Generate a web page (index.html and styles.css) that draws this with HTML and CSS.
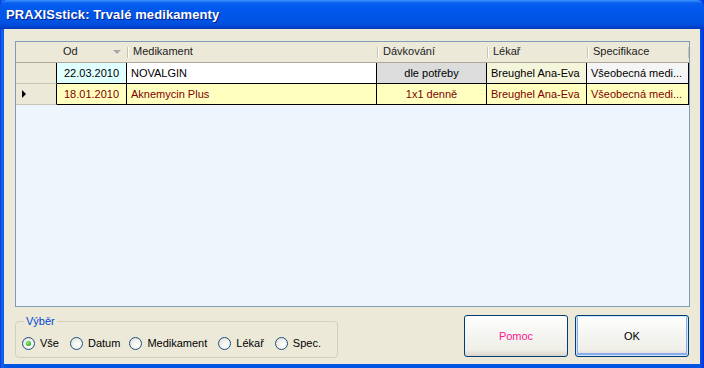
FILE: index.html
```html
<!DOCTYPE html>
<html lang="cs">
<head>
    <meta charset="UTF-8">
    <title>PRAXISstick: Trvalé medikamenty</title>
    <link rel="stylesheet" href="styles.css">
</head>
<body>
    <div class="window">
        <div class="titlebar">PRAXISstick: Trvalé medikamenty</div>
        <div class="client">
            <div class="grid">
                <div class="row header">
                    <div class="cell ind"></div>
                    <div class="cell col-od">Od <span class="sort"></span></div>
                    <div class="cell col-med">Medikament</div>
                    <div class="cell col-dav">Dávkování</div>
                    <div class="cell col-lek">Lékař</div>
                    <div class="cell col-spec">Specifikace</div>
                </div>
                <div class="row data">
                    <div class="cell ind"></div>
                    <div class="cell col-od c-center od-bg">22.03.2010</div>
                    <div class="cell col-med">NOVALGIN</div>
                    <div class="cell col-dav c-center dav-bg">dle potřeby</div>
                    <div class="cell col-lek lek-bg">Breughel Ana-Eva</div>
                    <div class="cell col-spec spec-bg">Všeobecná medi...</div>
                </div>
                <div class="row data current">
                    <div class="cell ind"><span class="arrow"></span></div>
                    <div class="cell col-od c-center">18.01.2010</div>
                    <div class="cell col-med">Aknemycin Plus</div>
                    <div class="cell col-dav c-center">1x1 denně</div>
                    <div class="cell col-lek">Breughel Ana-Eva</div>
                    <div class="cell col-spec">Všeobecná medi...</div>
                </div>
            </div>

            <div class="bottom">
                <fieldset class="groupbox">
                    <legend>Výběr</legend>
                    <label class="radio"><span class="dot checked"></span>Vše</label>
                    <label class="radio"><span class="dot"></span>Datum</label>
                    <label class="radio"><span class="dot"></span>Medikament</label>
                    <label class="radio"><span class="dot"></span>Lékař</label>
                    <label class="radio"><span class="dot"></span>Spec.</label>
                </fieldset>
                <div class="buttons">
                    <button class="btn help">Pomoc</button>
                    <button class="btn default">OK</button>
                </div>
            </div>
        </div>
    </div>
</body>
</html>
```

FILE: styles.css
```css
* {
    margin: 0;
    padding: 0;
    box-sizing: border-box;
}

body {
    width: 704px;
    height: 368px;
    overflow: hidden;
    font-family: "Liberation Sans", Arial, sans-serif;
    font-size: 11px;
}

.window {
    width: 704px;
    height: 368px;
    display: flex;
    flex-direction: column;
    background: linear-gradient(to right, #0831d9 0, #166aee 2px, #0055e5 4px, #0055e5 700px, #0831d9 704px);
}

.titlebar {
    height: 29px;
    flex: none;
    padding: 7px 0 0 6px;
    color: white;
    font-weight: bold;
    font-size: 13px;
    letter-spacing: 0.1px;
    text-shadow: 1px 1px 0 #0a1e8c;
    border-radius: 7px 7px 0 0;
    background: linear-gradient(to bottom, #3d95ff 0, #0a5ff0 3px, #0058ee 8px, #0055e5 18px, #0050de 24px, #0043cf 27px, #0038b8 29px);
}

.client {
    flex: 1;
    margin: 0 4px 4px 4px;
    background-color: #ece9d8;
    padding: 12px 10px 0 11px;
    display: flex;
    flex-direction: column;
}

.grid {
    height: 266px;
    border: 1px solid #7f9db9;
    background-color: #eff5fd;
}

.row {
    display: flex;
    height: 21px;
}

.row.header {
    background-color: #ece9d8;
    border-bottom: 1px solid #aca899;
    height: 21px;
}

.cell {
    height: 100%;
    padding: 0 4px;
    line-height: 20px;
    white-space: nowrap;
    overflow: hidden;
}

.ind { width: 41px; }
.col-od { width: 70px; }
.col-med { width: 250px; }
.col-dav { width: 110px; }
.col-lek { width: 100px; }
.col-spec { width: 102px; }

.header .cell {
    position: relative;
    line-height: 18px;
    padding-left: 6px;
    color: #222;
}

.header .cell + .cell + .cell::before {
    content: "";
    position: absolute;
    left: 0;
    top: 5px;
    width: 1px;
    height: 11px;
    background-color: #c7c5b2;
    box-shadow: 1px 0 0 #fff;
}

.header .col-spec::after {
    content: "";
    position: absolute;
    right: 0;
    top: 5px;
    width: 1px;
    height: 11px;
    background-color: #c7c5b2;
}

.sort {
    position: absolute;
    right: 6px;
    top: 8px;
    border-left: 4px solid transparent;
    border-right: 4px solid transparent;
    border-top: 4px solid #a7a6aa;
}

.data .cell {
    border-right: 1px solid #000;
    border-bottom: 1px solid #000;
    background-color: #fff;
    color: #000;
}

.data .ind {
    background-color: #ece9d8;
    border-right: 1px solid #000;
    border-bottom: 1px solid #c7c5b2;
    position: relative;
}

.c-center { text-align: center; }

.od-bg { background-color: #e0ffff !important; }
.dav-bg { background-color: #dcdcdc !important; }
.lek-bg { background-color: #f5f5dc !important; }
.spec-bg { background-color: #f5f5f5 !important; }

.current .cell {
    background-color: #ffffc0;
    color: #800000;
}

.current .ind {
    background-color: #ece9d8;
    border-bottom: 1px solid #c7c5b2;
}

.arrow {
    position: absolute;
    left: 6px;
    top: 6px;
    border-top: 4px solid transparent;
    border-bottom: 4px solid transparent;
    border-left: 4px solid #000;
}

.bottom {
    display: flex;
    justify-content: space-between;
    align-items: flex-start;
}

.groupbox {
    margin-top: 8px;
    width: 323px;
    height: 43px;
    border: 1px solid #d0d0bf;
    border-radius: 4px;
    padding: 2px 0 0 6px;
    display: flex;
}

.groupbox legend {
    color: #0046d5;
    padding: 0 2px;
    margin-left: 2px;
    line-height: 12px;
}

.radio {
    display: flex;
    align-items: center;
    margin-right: 11px;
    color: #000;
}

.radio:nth-child(3) {
    margin-right: 9px;
}

.dot {
    width: 13px;
    height: 13px;
    border: 1px solid #1c5180;
    border-radius: 50%;
    background: radial-gradient(circle at 65% 65%, #fff 0, #f4f3ee 40%, #dcd9cd 100%);
    margin-right: 5px;
    position: relative;
}

.dot.checked::after {
    content: "";
    position: absolute;
    left: 3px;
    top: 3px;
    width: 5px;
    height: 5px;
    border-radius: 50%;
    background: radial-gradient(circle at 40% 40%, #a6f39b 0, #38c12c 50%, #1f9b16 100%);
}

.buttons {
    display: flex;
    gap: 7px;
    margin-top: 8px;
    margin-right: 1px;
}

.btn {
    height: 42px;
    border: 1px solid #003c74;
    border-radius: 3px;
    background: linear-gradient(to bottom, #fff 0, #f6f6f3 40%, #efeee8 85%, #d8d5c9 100%);
    font-family: "Liberation Sans", Arial, sans-serif;
    font-size: 11px;
    color: #000;
}

.btn.help {
    width: 104px;
    color: #ff1493;
}

.btn.default {
    width: 114px;
    box-shadow: inset 0 0 0 1px #cee7ff, inset 0 -1px 0 2px #89adf0;
}
```
